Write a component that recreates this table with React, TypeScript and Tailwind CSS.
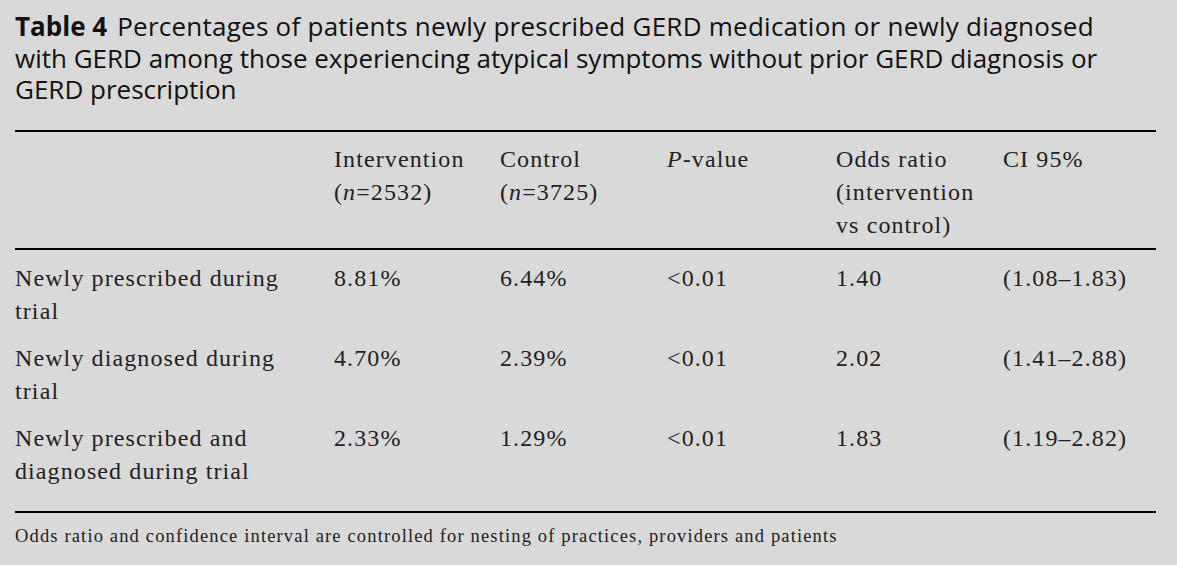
import React from "react";

const serif = { fontFamily: '"Liberation Serif", "Times New Roman", serif' };

const rows = [
  { label: ["Newly prescribed during", "trial"], v: ["8.81%", "6.44%", "<0.01", "1.40", "(1.08–1.83)"] },
  { label: ["Newly diagnosed during", "trial"], v: ["4.70%", "2.39%", "<0.01", "2.02", "(1.41–2.88)"] },
  { label: ["Newly prescribed and", "diagnosed during trial"], v: ["2.33%", "1.29%", "<0.01", "1.83", "(1.19–2.82)"] },
];

export default function App() {
  return (
    <div className="min-h-screen w-full bg-[#d9d9d9] text-[#111]">
      <div className="px-[15px] pt-[11px]">
        <h1
          className="text-[26px] leading-[31.5px] font-normal text-[#111] whitespace-nowrap"
          style={{ fontFamily: '"Open Sans", "Noto Sans", sans-serif' }}
        >
          <span className="font-bold">Table 4</span>
          <span className="ml-[10px] tracking-[0.25px]">
            Percentages of patients newly prescribed GERD medication or newly diagnosed
          </span>
          <br />
          with GERD among those experiencing atypical symptoms without prior GERD diagnosis or
          <br />
          GERD prescription
        </h1>
      </div>

      <div className="ml-[15px] mr-[21px] mt-[24px]" style={serif}>
        <div className="border-t-2 border-black" />
        <div className="grid grid-cols-[319px_166px_167px_169px_167px_1fr] pt-[11px] pb-[6px] text-[24px] leading-[33px] tracking-[1.1px] text-[#222]">
          <div />
          <div>
            Intervention
            <br />(<i>n</i>=2532)
          </div>
          <div>
            Control
            <br />(<i>n</i>=3725)
          </div>
          <div>
            <i>P</i>-value
          </div>
          <div>
            Odds ratio
            <br />
            (intervention
            <br />
            vs control)
          </div>
          <div>CI 95%</div>
        </div>
        <div className="border-t-2 border-black" />
        <div className="flex flex-col gap-[14px] pt-[12px] pb-[23px] text-[24px] leading-[33px] tracking-[1.1px] text-[#222]">
          {rows.map((r, i) => (
            <div key={i} className="grid grid-cols-[319px_166px_167px_169px_167px_1fr]">
              <div>
                {r.label[0]}
                <br />
                {r.label[1]}
              </div>
              {r.v.map((x, j) => (
                <div key={j}>{x}</div>
              ))}
            </div>
          ))}
        </div>
        <div className="border-t-2 border-black" />
        <div className="pt-[11px] text-[18.5px] leading-[24px] tracking-[1.15px] text-[#222]">
          Odds ratio and confidence interval are controlled for nesting of practices, providers and patients
        </div>
      </div>
    </div>
  );
}
